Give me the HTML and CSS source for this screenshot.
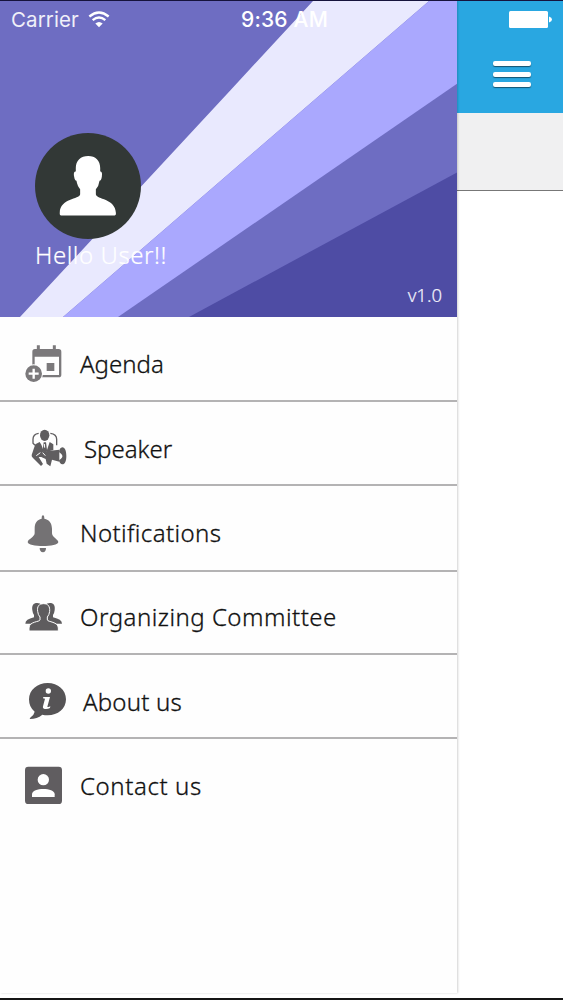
FILE: index.html
```html
<!DOCTYPE html>
<html lang="en">
<head>
    <meta charset="UTF-8">
    <meta name="viewport" content="width=device-width, initial-scale=1.0">
    <title>Event App</title>
    <link rel="stylesheet" href="styles.css">
</head>
<body>
    <div class="phone">
        <div class="status-bar">
            <span class="carrier">Carrier</span>
            <svg class="wifi" viewBox="0 0 66 50">
                <path d="M4 16Q33 -8 62 16" fill="none" stroke="#fff" stroke-width="7"/>
                <path d="M14 27Q33 11 52 27" fill="none" stroke="#fff" stroke-width="7"/>
                <path d="M22 37Q33 28 44 37L33 48z" fill="#fff"/>
            </svg>
            <span class="time">9:36 AM</span>
            <svg class="battery" viewBox="0 0 43 17">
                <rect width="39" height="17" rx="1.5" fill="#fff"/>
                <path d="M40 5.500q3 1 3 3t-3 3z" fill="#fff"/>
            </svg>
        </div>

        <nav class="drawer">
            <header class="profile">
                <svg class="rays" viewBox="0 0 457 317" preserveAspectRatio="none">
                    <path d="M0 0H457V317H0z" fill="#6e6dc2"/>
                    <path d="M313 0H429L63 317H20L230 90z" fill="#e9e9fe"/>
                    <path d="M429 0H457V83L118 317H63z" fill="#aaa8fe"/>
                    <path d="M457 172V317H189z" fill="#4e4ca4"/>
                </svg>
                <div class="profile-info">
                    <svg class="avatar" viewBox="106 38 317 317">
                        <circle cx="264.500" cy="196.500" r="158.500" fill="#323836"/>
                        <path d="M265 107C243 107 228 121 228 143V153C221 153 222 161 223 168Q225 181 230 181Q233 198 241 206V221C239 237 181 232 180 277Q179 285 187 285H341Q349 285 348 277C346 232 290 238 288 221V206Q297 197 299 181Q304 181 306 168C307 160 307 153 301 153V143C301 121 287 107 265 107z" fill="#fff"/>
                    </svg>
                    <div class="greeting">Hello User!!</div>
                </div>
                <span class="version">v1.0</span>
            </header>

            <ul class="menu">
                <li class="agenda">
                    <svg class="icon" viewBox="60 33 150 150" fill="#7b797b">
                        <path d="M115 46v14M163 46v14" stroke="#7b797b" stroke-width="9"/>
                        <path fill-rule="evenodd" d="M105 57H176Q184 57 184 65V134Q184 142 176 142H97V65Q97 57 105 57zM104 80V135H177V80z"/>
                        <rect x="140" y="99" width="23" height="24"/>
                        <circle cx="101" cy="131" r="28" fill="#fff"/>
                        <circle cx="101" cy="131" r="25"/>
                        <path d="M101 116v30M86 131h30" stroke="#fff" stroke-width="7"/>
                    </svg>
                    <span>Agenda</span>
                </li>
                <li class="speaker">
                    <svg class="icon" viewBox="60 48 150 150" fill="#605e60">
                        <ellipse cx="134" cy="76" rx="14" ry="17"/>
                        <path d="M116 70Q99 72 99 88V100L105 106M151 70Q170 72 170 88V106" fill="none" stroke="#605e60" stroke-width="4"/>
                        <path d="M119 96L106 103Q101 117 95 135Q94 140 99 144L123 168L129 162L116 141H126L133 128L124 104zM149 96L139 126L160 120V103z"/>
                        <path d="M131 97h7l3 24-7 10-6-10z"/>
                        <path d="M123 134L137 124L178 119V155L156 149L151 169L140 161L137 147L125 142z"/>
                        <path fill-rule="evenodd" d="M187 112C195 112 199 123 199 138S195 163 187 163Q179 162 177 151L183 146Q191 140 184 132L177 126Q179 113 187 112z"/>
                        <path d="M109 137L121 128M128 128L136 137M133 102L134 113" stroke="#fff" stroke-width="3"/>
                    </svg>
                    <span>Speaker</span>
                </li>
                <li class="notifications">
                    <svg class="icon" viewBox="60 30 150 150" fill="#747274">
                        <path d="M129 46Q133 46 133 56C148 59 155 68 156 86V100C157 113 173 117 175 126C175 142 83 142 83 126C85 117 103 112 104 100V86C104 68 111 59 125 56Q125 46 129 46z"/>
                        <path d="M119 144H138Q138 156 129 157Q119 156 119 144z"/>
                    </svg>
                    <span>Notifications</span>
                </li>
                <li class="committee">
                    <svg class="icon" viewBox="60 48 150 150" fill="#5e5c5e">
                        <path d="M112 69C99 69 95 77 97 91Q98 100 102 105V112Q76 118 76 131H125V75Q120 69 112 69z"/>
                        <path d="M149 69C162 69 166 77 164 91Q163 100 159 105V112Q186 118 186 131H136V75Q141 69 149 69z"/>
                        <path d="M131 71C116 71 111 80 113 94Q114 105 120 111V120C119 126 87 124 87 144V153H175V144C175 125 143 126 142 120V111Q148 104 149 94C150 80 145 71 131 71z" stroke="#fff" stroke-width="3"/>
                    </svg>
                    <span>Organizing Committee</span>
                </li>
                <li class="about">
                    <svg class="icon" viewBox="60 27 150 150" fill="#565456">
                        <path d="M143 39C174 39 198 60 198 88S174 136 143 136Q134 136 127 134Q111 147 90 147Q87 145 93 141Q102 134 104 125Q87 112 87 88C87 60 112 39 143 39z"/>
                        <circle cx="145" cy="63" r="8" fill="#fff"/>
                        <path d="M130 81H150L142 110Q144 113 151 109L150 114Q143 118 135 117Q127 116 129 109L135 86L129 85z" fill="#fff"/>
                    </svg>
                    <span>About us</span>
                </li>
                <li class="contact">
                    <svg class="icon" viewBox="60 39 150 150">
                        <rect x="75" y="50" width="111" height="112" rx="10" fill="#605d60"/>
                        <circle cx="130" cy="89" r="17" fill="#fff"/>
                        <path d="M96 141V133C96 112 164 112 164 133V141z" fill="#fff"/>
                    </svg>
                    <span>Contact us</span>
                </li>
            </ul>
        </nav>

        <main class="page">
            <div class="navbar">
                <div class="hamburger">
                    <i></i>
                    <i></i>
                    <i></i>
                </div>
            </div>
            <div class="toolbar"></div>
        </main>
    </div>
</body>
</html>
```
FILE: styles.css
```css
* { box-sizing: border-box; }
body { margin: 0; background: #fff; font-family: "Noto Sans", sans-serif; font-weight: 300; color: #111; }
.phone { position: relative; display: flex; width: 563px; height: 1000px; overflow: hidden; border-top: 1px solid #16133d; border-bottom: 2px solid #151515; }

/* status bar floats over the drawer and the page */
.status-bar { position: absolute; z-index: 2; top: 0; left: 0; width: 100%; height: 36px; display: flex; align-items: center; padding: 0 11px; color: #fff; font-family: Inter, sans-serif; font-size: 20px; }
.carrier { width: 68px; font-size: 20.5px; font-weight: 400; letter-spacing: 0.1px; opacity: 0.9; }
.wifi { width: 22px; height: 17px; margin-left: 9px; }
.time { width: 95px; margin-left: 131px; font-size: 21px; font-weight: 500; letter-spacing: 0.2px; white-space: nowrap; }
.battery { width: 43px; height: 17px; margin-left: auto; }

.drawer { width: 457px; height: 992px; flex: none; background: #fefefe; box-shadow: 1px 0 2px rgba(0,0,0,0.18); z-index: 1; }
.profile { display: grid; height: 316px; }
.profile > * { grid-area: 1 / 1; }
.rays { width: 457px; height: 316px; }
.profile-info { z-index: 1; padding: 132px 0 0 35px; }
.avatar { display: block; width: 106px; height: 106px; }
.greeting { margin-top: 1px; font-size: 24px; line-height: 30px; letter-spacing: 0.55px; color: #fff; -webkit-text-stroke: 0.2px #fff; }
.version { z-index: 1; align-self: end; justify-self: end; padding: 0 15px 10px 0; font-size: 18.5px; line-height: 24px; color: #f1f0fb; -webkit-text-stroke: 0.2px #f1f0fb; }

.menu { list-style: none; margin: 0; padding: 0; }
.menu li { display: flex; align-items: flex-start; height: 84px; padding: 24px 0 0 20px; border-bottom: 2px solid #b4b3b4; font-size: 24px; line-height: 30px; white-space: nowrap; }
.menu span { margin: 8px 0 0 10px; -webkit-text-stroke: 0.3px #111; }
.icon { width: 50px; height: 50px; flex: none; }
.menu .agenda { height: 85px; }
.menu .speaker span { margin-left: 14px; }
.menu .notifications { height: 86px; letter-spacing: 0.4px; }
.menu .committee { height: 83px; letter-spacing: 0.5px; }
.menu .committee span { margin-top: 6px; }
.menu .about { letter-spacing: 0.2px; }
.menu .about span { margin-left: 13px; }
.menu .contact { border-bottom: none; letter-spacing: 0.6px; }

.page { flex: 1; }
.navbar { height: 112px; padding: 60px 32px 0 36px; background: #29a7e1; }
.hamburger { display: flex; flex-direction: column; gap: 5.500px; }
.hamburger i { height: 5px; border-radius: 2px; background: #fff; box-shadow: 0 1px 1px rgba(0,0,0,0.5); }
.toolbar { height: 78px; background: #f0f0f1; border-bottom: 1px solid #777; }
```
